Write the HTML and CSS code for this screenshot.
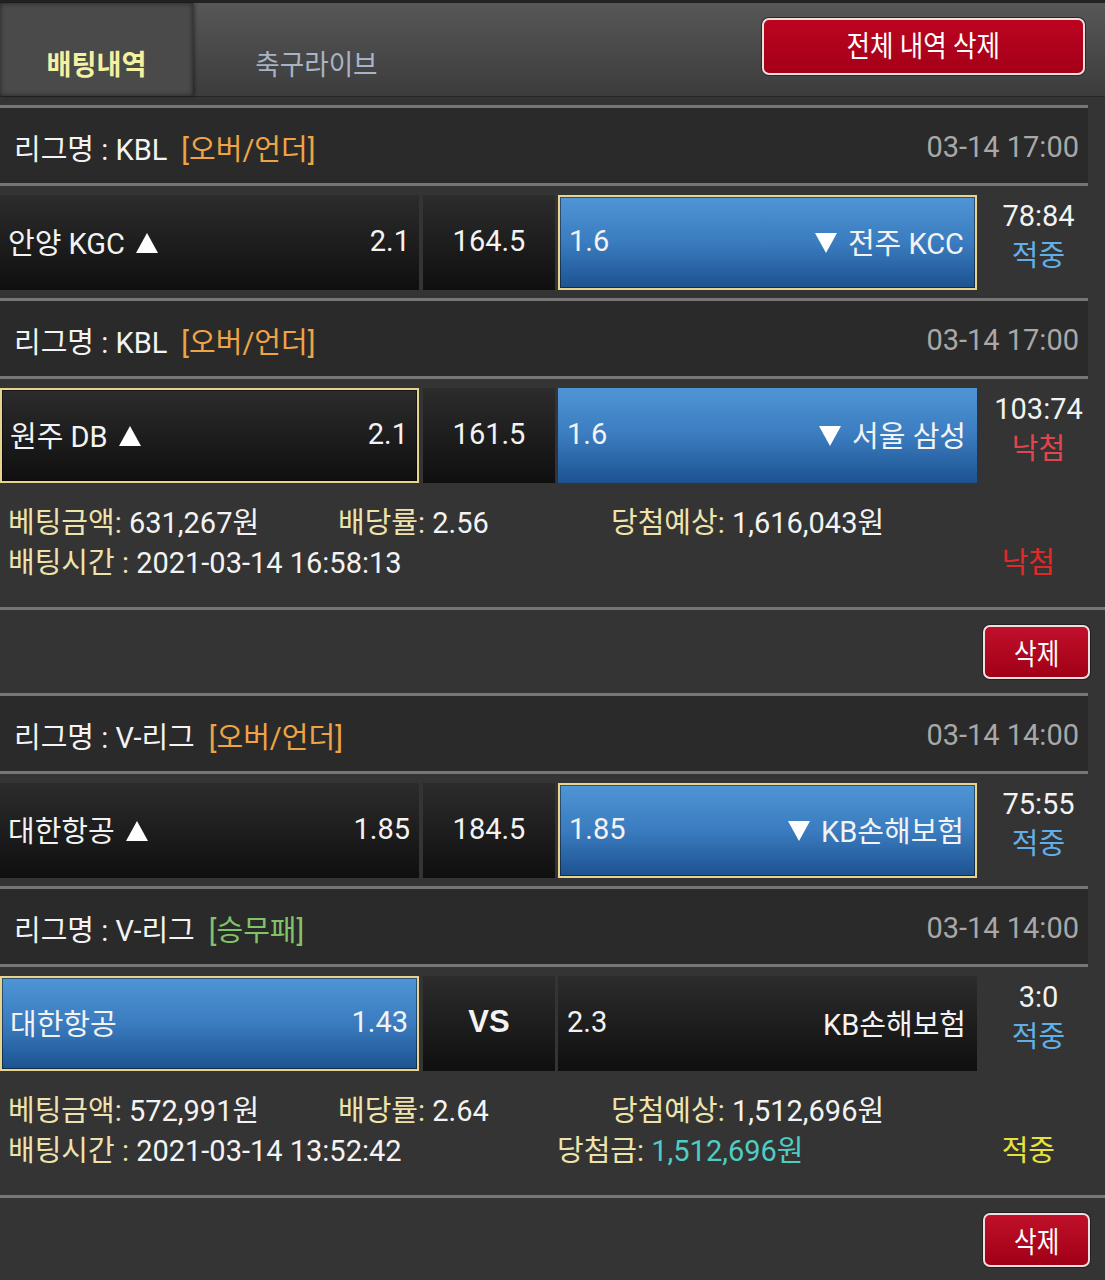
FILE: index.html
```html
<!DOCTYPE html>
<html lang="ko">
<head>
<meta charset="utf-8">
<title>배팅내역</title>
<link rel="stylesheet" href="styles.css">
</head>
<body>
<div class="topbar">
  <div class="tab active"><span class="sq">배팅내역</span></div>
  <div class="tab"><span class="sq">축구라이브</span></div>
  <button class="btn-all"><span class="sq">전체 내역 삭제</span></button>
</div>

<div class="bet">
  <div class="game">
    <div class="league"><span>리그명 : KBL</span><span class="type ou">[오버/언더]</span><span class="date">03-14 17:00</span></div>
    <div class="match">
      <div class="cell home"><span>안양 KGC <i class="up"></i></span><span>2.1</span></div>
      <div class="cell mid">164.5</div>
      <div class="cell away blue picked"><span>1.6</span><span><i class="down"></i> 전주 KCC</span></div>
      <div class="score"><div>78:84</div><div class="win">적중</div></div>
    </div>
  </div>
  <div class="game">
    <div class="league"><span>리그명 : KBL</span><span class="type ou">[오버/언더]</span><span class="date">03-14 17:00</span></div>
    <div class="match">
      <div class="cell home picked"><span>원주 DB <i class="up"></i></span><span>2.1</span></div>
      <div class="cell mid">161.5</div>
      <div class="cell away blue"><span>1.6</span><span><i class="down"></i> 서울 삼성</span></div>
      <div class="score"><div>103:74</div><div class="lose">낙첨</div></div>
    </div>
  </div>
  <div class="info">
    <div class="irow">
      <span class="c1"><span class="lbl">베팅금액:</span> 631,267원</span>
      <span class="c2"><span class="lbl">배당률:</span> 2.56</span>
      <span class="c3"><span class="lbl">당첨예상:</span> 1,616,043원</span>
    </div>
    <div class="irow">
      <span class="c1w"><span class="lbl">배팅시간 :</span> 2021-03-14 16:58:13</span>
      <span class="c2w"></span>
      <span class="result lose2">낙첨</span>
    </div>
  </div>
  <div class="foot"><button class="btn-del"><span class="sq">삭제</span></button></div>
</div>

<div class="bet">
  <div class="game">
    <div class="league"><span>리그명 : V-리그</span><span class="type ou">[오버/언더]</span><span class="date">03-14 14:00</span></div>
    <div class="match">
      <div class="cell home"><span>대한항공 <i class="up"></i></span><span>1.85</span></div>
      <div class="cell mid">184.5</div>
      <div class="cell away blue picked"><span>1.85</span><span><i class="down"></i> KB손해보험</span></div>
      <div class="score"><div>75:55</div><div class="win">적중</div></div>
    </div>
  </div>
  <div class="game">
    <div class="league"><span>리그명 : V-리그</span><span class="type wdl">[승무패]</span><span class="date">03-14 14:00</span></div>
    <div class="match">
      <div class="cell home blue picked"><span>대한항공</span><span>1.43</span></div>
      <div class="cell mid vs">VS</div>
      <div class="cell away"><span>2.3</span><span>KB손해보험</span></div>
      <div class="score"><div>3:0</div><div class="win">적중</div></div>
    </div>
  </div>
  <div class="info">
    <div class="irow">
      <span class="c1"><span class="lbl">베팅금액:</span> 572,991원</span>
      <span class="c2"><span class="lbl">배당률:</span> 2.64</span>
      <span class="c3"><span class="lbl">당첨예상:</span> 1,512,696원</span>
    </div>
    <div class="irow">
      <span class="c1w"><span class="lbl">배팅시간 :</span> 2021-03-14 13:52:42</span>
      <span class="c2w"><span class="lbl">당첨금:</span> <span class="teal">1,512,696원</span></span>
      <span class="result win2">적중</span>
    </div>
  </div>
  <div class="foot"><button class="btn-del"><span class="sq">삭제</span></button></div>
</div>
</body>
</html>
```

FILE: styles.css
```css
html, body {
  margin: 0;
  padding: 0;
}
body {
  background: #343434;
  font-family: Roboto, "Noto Sans CJK KR", sans-serif;
  font-size: 29px;
  color: #f3f3f3;
  width: 1105px;
  overflow: hidden;
}

.sq {
  display: inline-block;
  white-space: nowrap;
}

.topbar {
  height: 97px;
  box-sizing: border-box;
  border-top: 3px solid #222;
  border-bottom: 1px solid #262626;
  background: linear-gradient(#575757, #3c3c3c);
  display: flex;
  align-items: stretch;
  margin-bottom: 8px;
}
.tab {
  width: 247px;
  text-align: center;
  padding-top: 43px;
  line-height: 40px;
  font-size: 28px;
  color: #a9b3c6;
  box-sizing: border-box;
}
.tab .sq {
  transform: scaleX(0.95);
}
.tab.active {
  width: 193px;
  background: #4a4a4a;
  color: #f4f1a0;
  font-weight: bold;
  box-shadow: inset 0 0 5px rgba(0, 0, 0, 0.55), 2px 0 3px rgba(0, 0, 0, 0.35);
}
.tab.active .sq {
  transform: scaleX(0.97);
}
.btn-all {
  margin: 15px 20px 0 auto;
  width: 323px;
  height: 57px;
  box-sizing: border-box;
  border: 2px solid #efdede;
  border-radius: 7px;
  background: linear-gradient(#bb0420, #a50018);
  box-shadow: 0 0 0 1px #2a2a2a;
  color: #fff;
  font-family: Roboto, "Noto Sans CJK KR", sans-serif;
  font-size: 29px;
  line-height: 50px;
  padding: 0;
}
.btn-all .sq {
  transform: scaleX(0.88);
}

.game {
  width: 1088px;
}
.league {
  border-top: 3px solid #767676;
  border-bottom: 3px solid #767676;
  background: #2a2a2a;
  display: flex;
  align-items: center;
  padding: 2px 9px 0 14px;
  box-sizing: border-box;
  height: 81px;
}
.type {
  margin-left: 14px;
}
.ou { color: #eea444; }
.wdl { color: #7fc466; }
.date {
  margin-left: auto;
  color: #a8a8a8;
}

.match {
  display: flex;
  padding: 9px 0 8px;
}
.cell {
  flex: none;
  height: 95px;
  box-sizing: border-box;
  display: flex;
  align-items: center;
  justify-content: space-between;
  white-space: nowrap;
  padding-bottom: 3px;
  background: linear-gradient(#2c2c2c, #0f0f0f);
}
.home {
  width: 419px;
  margin-right: 4px;
  padding-left: 8px;
  padding-right: 9px;
}
.mid {
  width: 132px;
  margin-right: 3px;
  justify-content: center;
}
.vs {
  font-family: "Liberation Sans", Arial, sans-serif;
  font-weight: bold;
  font-size: 31px;
}
.away {
  width: 419px;
  padding-left: 9px;
  padding-right: 11px;
}
.blue {
  background: linear-gradient(#4f95d5, #3a7cbf 50%, #1d5290);
}
.picked {
  border: 2px solid #e7d48e;
  box-shadow: inset 0 0 0 1px rgba(0, 0, 0, 0.45);
}
.up, .down {
  display: inline-block;
  width: 0;
  height: 0;
  border-left: 11px solid transparent;
  border-right: 11px solid transparent;
  margin: 0 2px 1px 4px;
}
.up {
  border-bottom: 20px solid #fff;
}
.down {
  border-top: 20px solid #fff;
  margin: 0 4px 1px 0;
}
.score {
  flex: none;
  width: 111px;
  box-sizing: border-box;
  padding: 1px 0 0 12px;
  text-align: center;
  line-height: 40px;
  white-space: nowrap;
}
.win { color: #62aee6; }
.lose { color: #e2454d; }

.info {
  width: 1088px;
  padding: 12px 0 24px 8px;
  box-sizing: border-box;
  line-height: 40px;
}
.irow {
  display: flex;
  white-space: nowrap;
}
.lbl { color: #efe3ad; }
.c1 { width: 330px; flex: none; }
.c2 { width: 273px; flex: none; }
.c1w { width: 549px; flex: none; }
.c2w { flex: 1; }
.result {
  flex: none;
  margin-right: 33px;
}
.lose2 { color: #e02a2a; }
.win2 { color: #e8e23c; }
.teal { color: #4fcdc4; }

.foot {
  border-top: 3px solid #767676;
  height: 83px;
  display: flex;
  justify-content: flex-end;
  align-items: center;
  padding-right: 15px;
}
.btn-del {
  width: 107px;
  height: 54px;
  box-sizing: border-box;
  border: 2px solid #efdede;
  border-radius: 7px;
  background: linear-gradient(#c0102a, #a00016);
  box-shadow: 0 0 0 1px #222;
  color: #fff;
  font-family: Roboto, "Noto Sans CJK KR", sans-serif;
  font-size: 29px;
  padding: 0;
}
.btn-del .sq {
  transform: scaleX(0.85);
}
```
